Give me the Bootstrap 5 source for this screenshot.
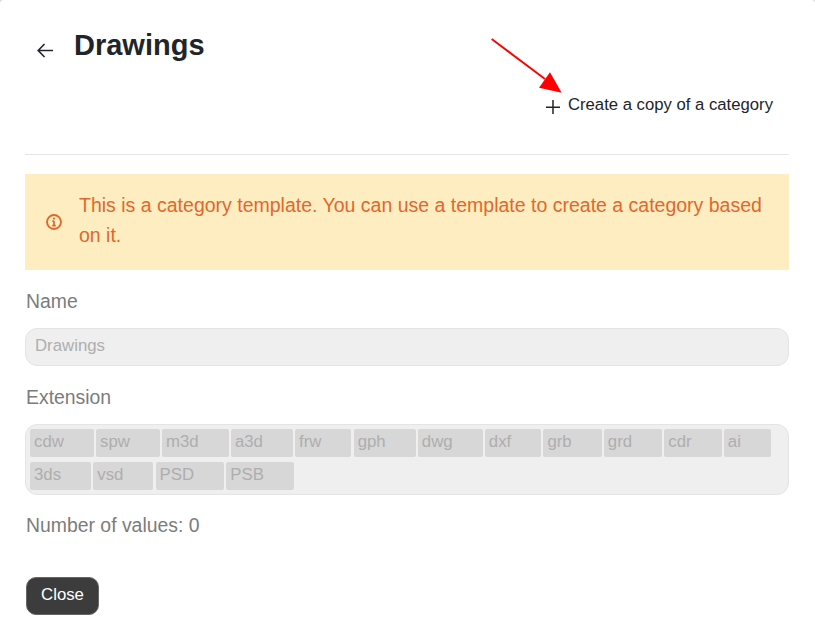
<!DOCTYPE html>
<html lang="en">
<head>
    <meta charset="UTF-8">
    <meta name="viewport" content="width=device-width, initial-scale=1.0">
    <title>Drawings</title>
    <link href="https://cdn.jsdelivr.net/npm/bootstrap@5.3.0/dist/css/bootstrap.min.css" rel="stylesheet">
    <style>
        body {
            font-family: "Liberation Sans", Arial, sans-serif;
            background: #ddd;
            color: #212529;
            overflow: hidden;
        }
        .page-wrap {
            position: relative;
            padding: 0 26px 0 25px;
            height: 640px;
            background: #fff;
            border-radius: 4px;
        }
        .head-row {
            height: 155px;
            border-bottom: 1px solid #e4e4e4;
        }
        .back-link {
            padding-top: 43px;
            margin-left: 12px;
            width: 37px;
            line-height: 0;
        }
        .page-title {
            font-size: 29px;
            font-weight: 700;
            line-height: 34px;
            margin: 28px 0 0;
        }
        .copy-link {
            position: absolute;
            top: 95px;
            right: 42px;
            color: #212529;
            font-size: 16.7px;
            line-height: 20px;
            text-decoration: none;
        }
        .plus-icon {
            margin-top: 4px;
        }
        .red-arrow {
            position: absolute;
            left: 488px;
            top: 36px;
        }
        .info-box {
            margin-top: 19px;
            height: 96px;
            padding: 0 21px;
            background: #ffedc2;
            color: #df682c;
            font-size: 19.5px;
            line-height: 30px;
        }
        .info-icon {
            margin-right: 17px;
        }
        .field-label {
            color: #7c7c7c;
            font-size: 19.4px;
            line-height: 24px;
            margin: 19px 0 0 1px;
        }
        .values-label {
            margin-top: 18px;
        }
        .name-box {
            height: 38px;
            margin-top: 15px;
            padding: 1px 9px 0;
            background: #efefef;
            border: 1px solid #e4e4e4;
            border-radius: 12px;
            color: #aeaeae;
            font-size: 16.8px;
            line-height: 32px;
        }
        .ext-box {
            height: 71px;
            margin-top: 15px;
            padding: 4px;
            background: #efefef;
            border: 1px solid #e4e4e4;
            border-radius: 12px;
            row-gap: 5px;
            column-gap: 2.2px;
            align-content: flex-start;
        }
        .ext-tag {
            height: 28px;
            padding: 0 30px 0 4px;
            background: #d7d7d7;
            border-radius: 2px;
            color: #aeaeae;
            font-size: 16.8px;
            line-height: 25px;
        }
        .close-btn {
            margin: 40px 0 0 1px;
            width: 73px;
            height: 38px;
            padding: 0 0 2px;
            background: #3c3c3c;
            border: 1px solid #666;
            border-radius: 10px;
            color: #fff;
            font-size: 16.8px;
        }
    </style>
</head>
<body>
    <div class="page-wrap">
        <div class="head-row d-flex">
            <a href="#" class="back-link d-block">
                <svg width="17" height="15" viewBox="0 0 17 15" fill="none" stroke="#212529" stroke-width="1.6"><path d="M16 7.5H1.5M7.5 1 1.2 7.5 7.5 14"/></svg>
            </a>
            <h1 class="page-title">Drawings</h1>
        </div>

        <a href="#" class="copy-link d-flex align-items-center gap-2">
            <svg class="plus-icon" width="14" height="14" viewBox="0 0 14 14" stroke="#212529" stroke-width="1.5"><path d="M7 0v14M0 7.3h14"/></svg>
            <span>Create a copy of a category</span>
        </a>

        <svg class="red-arrow" width="80" height="62" viewBox="0 0 80 62">
            <path d="M3.7 3 57 43" stroke="#f00" stroke-width="1.9" fill="none"/>
            <path d="M73.7 56.7 51 51.7 62 36.3Z" fill="#f00"/>
        </svg>

        <div class="info-box d-flex align-items-center">
            <svg class="info-icon flex-shrink-0" width="16" height="16" viewBox="0 0 16 16" fill="none" stroke="#df682c"><circle cx="8" cy="8" r="7" stroke-width="1.9"/><path d="M8 7v4.4M6.2 11.6h3.6M6.2 7H8" stroke-width="1.7"/><circle cx="8" cy="4.6" r="1.1" fill="#df682c" stroke="none"/></svg>
            <div class="pb-1">This is a category template. You can use a template to create a category based on it.</div>
        </div>

        <div class="field-label">Name</div>
        <div class="name-box">Drawings</div>

        <div class="field-label">Extension</div>
        <div class="ext-box d-flex flex-wrap">
            <span class="ext-tag">cdw</span>
            <span class="ext-tag">spw</span>
            <span class="ext-tag">m3d</span>
            <span class="ext-tag">a3d</span>
            <span class="ext-tag">frw</span>
            <span class="ext-tag">gph</span>
            <span class="ext-tag">dwg</span>
            <span class="ext-tag">dxf</span>
            <span class="ext-tag">grb</span>
            <span class="ext-tag">grd</span>
            <span class="ext-tag">cdr</span>
            <span class="ext-tag">ai</span>
            <span class="ext-tag">3ds</span>
            <span class="ext-tag">vsd</span>
            <span class="ext-tag">PSD</span>
            <span class="ext-tag">PSB</span>
        </div>

        <div class="field-label values-label">Number of values: 0</div>

        <button type="button" class="btn close-btn d-block">Close</button>
    </div>
    <script src="https://cdn.jsdelivr.net/npm/bootstrap@5.3.0/dist/js/bootstrap.bundle.min.js"></script>
</body>
</html>
